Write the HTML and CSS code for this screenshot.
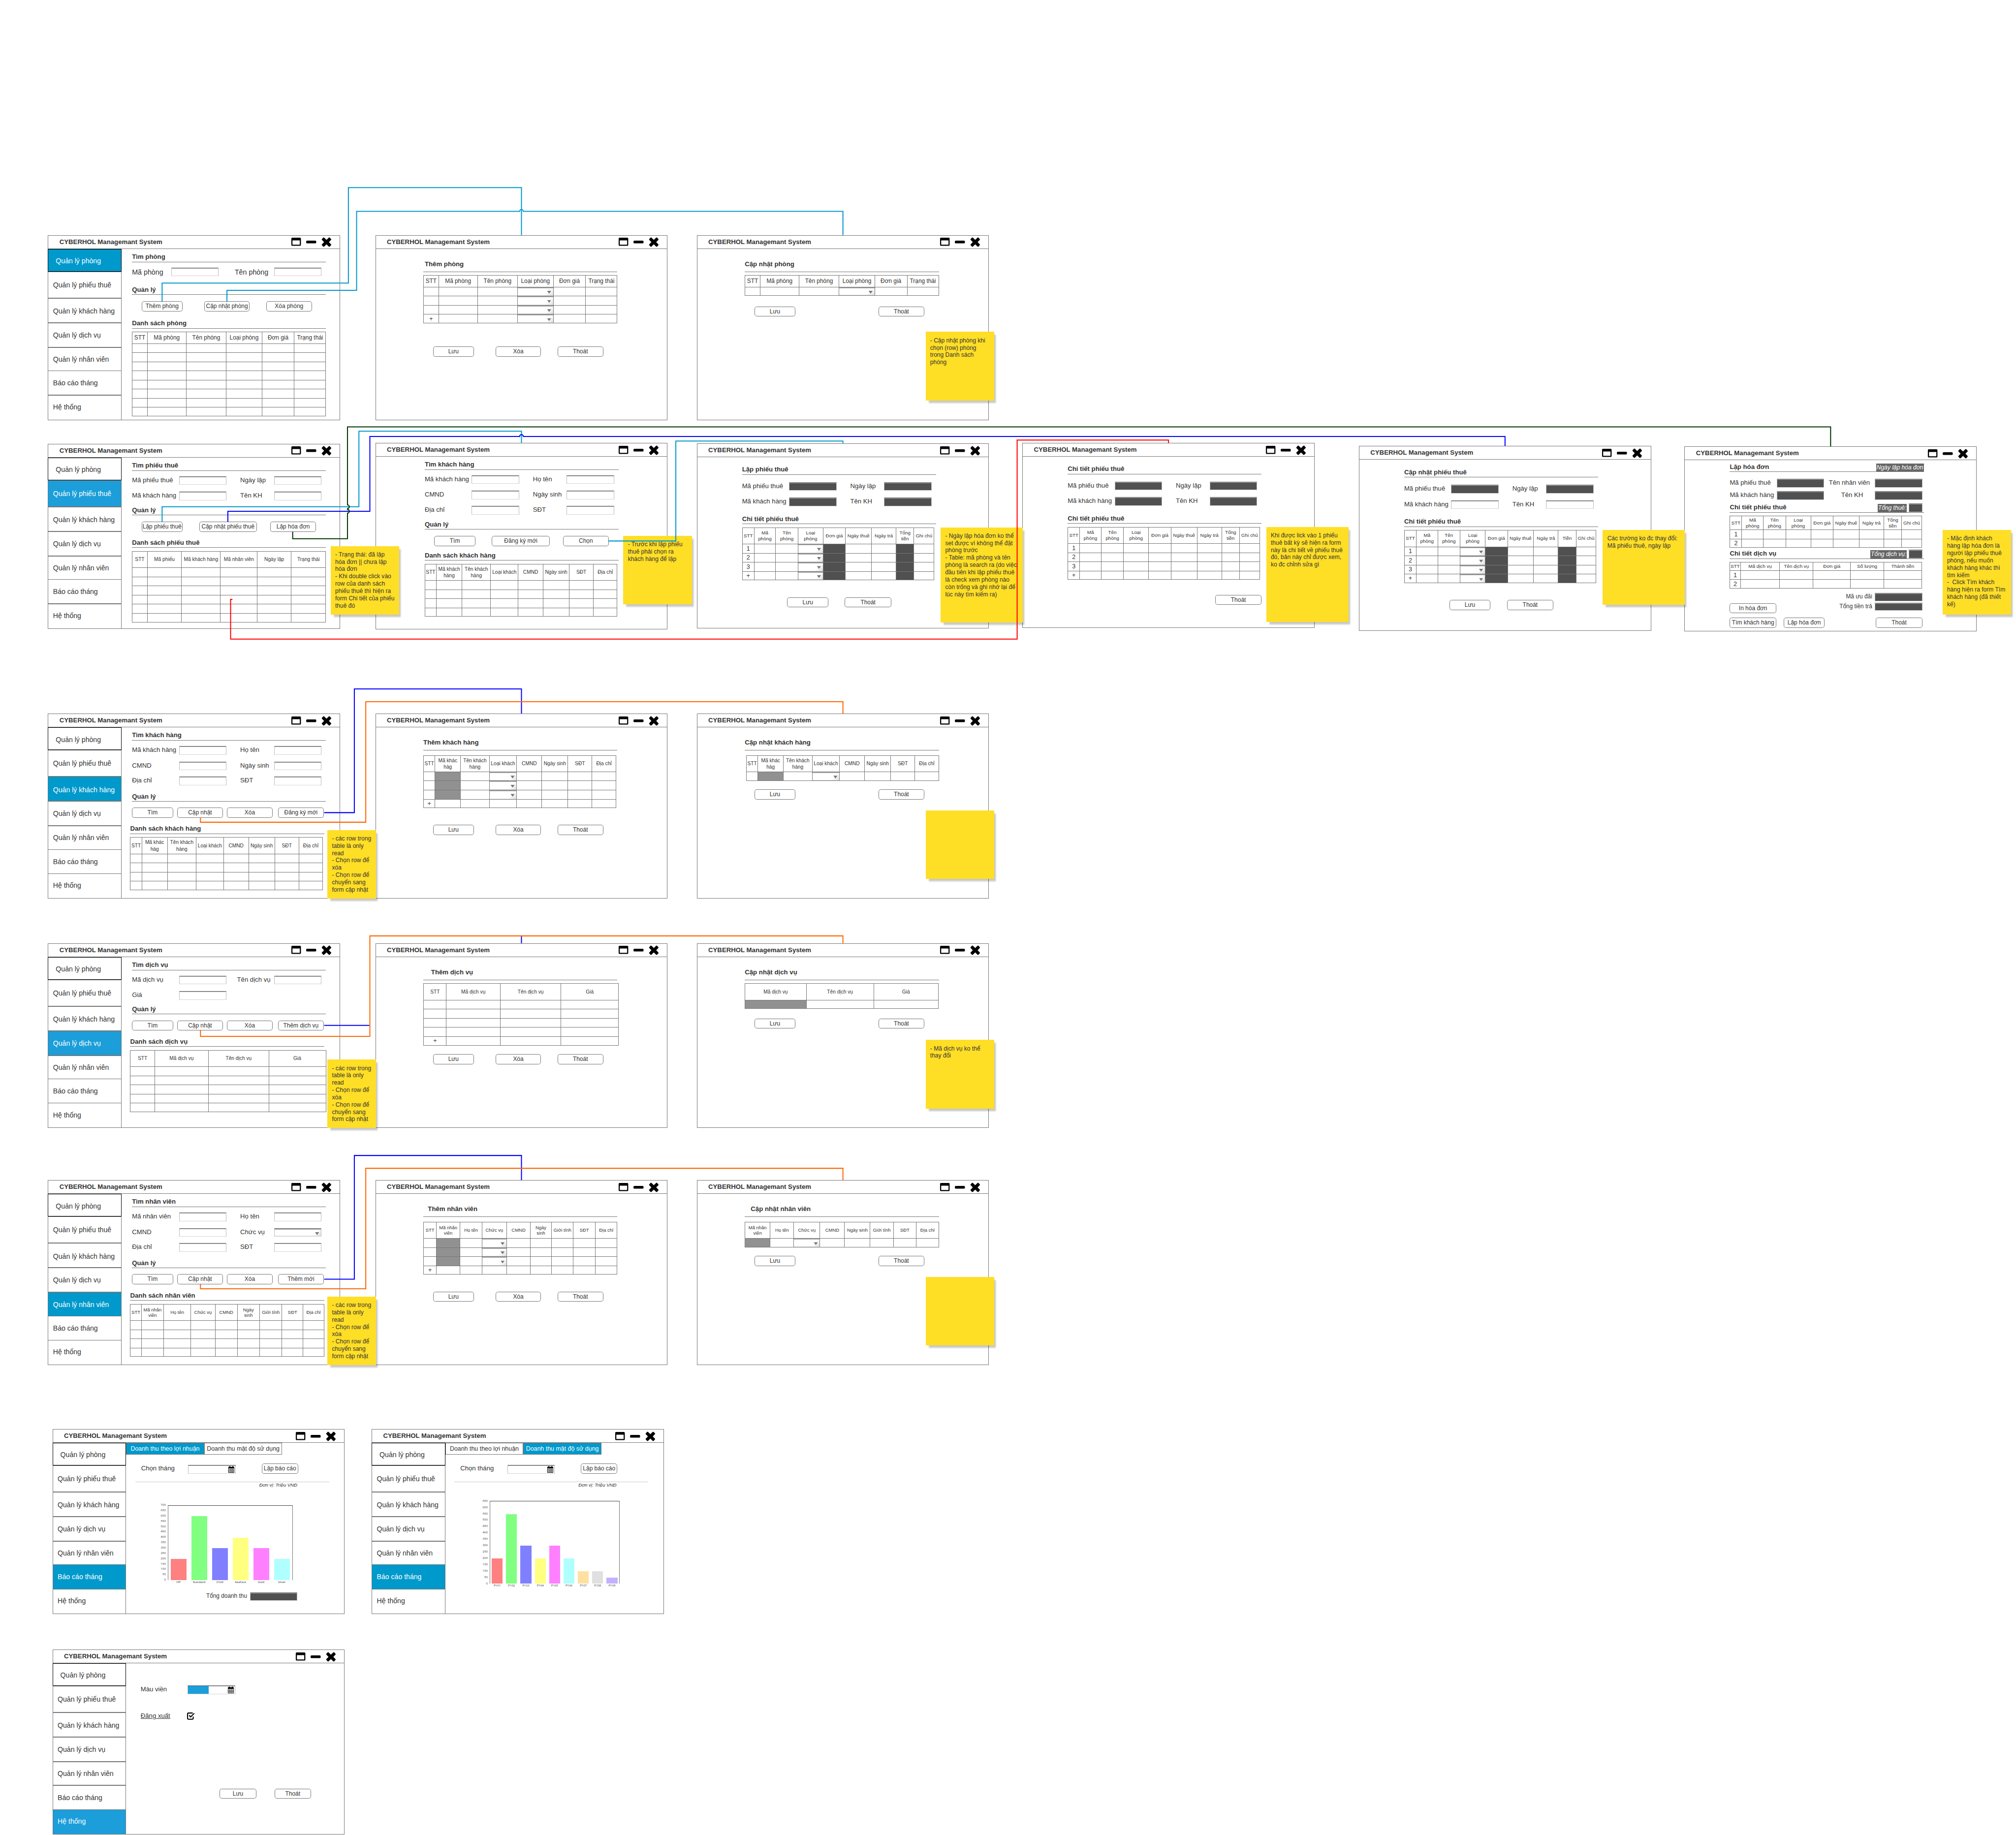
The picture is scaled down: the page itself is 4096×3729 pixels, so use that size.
FILE: styles.css
```
* { box-sizing: border-box; }
html { overflow: hidden; background: #fff; }
body { margin: 0; font-family: "Liberation Sans", Arial, sans-serif; color: #333; }
p, h2, h3, ul { margin: 0; padding: 0; }
.defs { display: none; }

/* canvas */
.board { position: relative; width: 4415px; height: 4019px; zoom: 0.92775; background: #fff; }
.links { position: absolute; inset: 0; width: 4415px; height: 4019px; fill: none; stroke-width: 2.2; }
.cyan { stroke: #09c; }
.blue { stroke: #00f; }
.orange { stroke: #f60; }
.green { stroke: #030; }
.red { stroke: #f00; }

/* windows */
.win { position: absolute; width: 640px; height: 405px; border: 1px solid #777; display: flex; flex-direction: column; }
.tall { height: 409px; }
.bar { flex: none; height: 29px; border-bottom: 1px solid #777; display: flex; justify-content: space-between; padding: 0 18px 0 24px; }
.bar h2 { font-size: 14.25px; line-height: 28px; white-space: nowrap; }
.ctl { width: 89px; height: 22px; margin-top: 4px; }
.body { flex: 1; display: flex; min-height: 0; }
.side { flex: none; width: 161px; margin: 0 0 -1px -1px; list-style: none; font-size: 15.2px; }
.side li { border: 1px solid #777; height: 54px; padding: 0 0 0 10px; display: flex; align-items: center; white-space: nowrap; }
.side li:nth-child(1) { height: 50px; border-color: #000; padding: 3px 0 0 16px; }
.side li:nth-child(2) { height: 58px; }
.side li:nth-child(3) { padding-top: 3px; }
.side li:nth-child(5) { height: 52px; }
.side li:nth-child(6) { margin-top: -1px; }
.side li:nth-child(7) { height: 55px; margin-top: -1px; padding-bottom: 3px; }
.side li.on { background: #09c; color: #fff; }
.side li.lite, .tabs .lite { background: #1b9ed9; }
.main { flex: 1; min-width: 0; padding-left: 23px; }
.dialog { padding-left: 104px; }
.detail { padding-left: 98px; }
.cust { padding-left: 107px; }
.list { margin-left: -4px; }

/* positions on the canvas */
.r1 { top: 515px; } .r2 { top: 972px; } .r3 { top: 1563px; } .r4 { top: 2066px; } .r5 { top: 2585px; } .r6 { top: 3130px; } .r7 { top: 3613px; }
.c1 { left: 105px; } .c2 { left: 822px; } .c3 { left: 1526px; } .c4 { left: 2239px; } .c5 { left: 2976px; } .c6 { left: 3689px; }
.r2.c2, .r2.c4 { top: 970px; }
.r2.c3 { top: 971px; }
.r2.c5 { top: 977px; }
.r2.c6 { top: 978px; }
.r6.c1, .r7.c1 { left: 115px; }
.r6.c2 { left: 814px; }

/* headings */
h3 { width: 425px; height: 20px; border-bottom: 1px solid #777; font-size: 14.25px; line-height: 18px; white-space: nowrap; }
h3.loose { height: 25px; line-height: 16px; }
h3.split { display: flex; justify-content: space-between; }
.in-3 { text-indent: 3px; } .in-10 { text-indent: 10px; } .in-13 { text-indent: 13px; } .in-17 { text-indent: 17px; }
.tag { display: flex; align-items: flex-end; gap: 4px; }
.tag i { background: #666; color: #fff; font: italic 13px/18px "Liberation Sans", Arial, sans-serif; padding: 0 1px; height: 18px; }
.tag .in { width: 30px; margin-right: 3px; }

/* fields */
.row { display: grid; grid-template-columns: 103px 134px 74px 104px; height: 19px; font-size: 14.2px; line-height: 17px; white-space: nowrap; }
.row.rooms { grid-template-columns: 86px 139px 86px 104px; font-size: 15.4px; line-height: 21px; }
.row.svc { grid-template-columns: 103px 127px 81px 104px; }
.row.bill { grid-template-columns: 103px 114px 101px 104px; }
.indent { padding-left: 27px; }
.in { width: 104px; height: 19px; border: 1px solid #bbb; border-top-color: #666; border-bottom-color: #d4d4d4; box-shadow: inset 0 1px #aaa; display: flex; }
.dark { background: #505050; }
.sum { display: grid; grid-template-columns: 80px 104px; justify-content: end; height: 18px; font-size: 12.8px; line-height: 16px; white-space: nowrap; }
.sum .in { height: 18px; }
.sum span { padding-right: 6px; justify-self: end; }
.foot { width: 422px; padding-top: 10px; }
.foot-row { display: flex; justify-content: space-between; margin-top: 3px; height: 23px; }
.foot-row .btn { margin-top: 1px; }

/* buttons */
.btns { display: flex; height: 22px; }
.btn { flex: none; width: 100px; height: 22px; border: 1px solid #777; border-radius: 5px; background: #fff; font-size: 12.9px; line-height: 20px; white-space: nowrap; display: flex; justify-content: center; }
.w80 { width: 80px; } .w90 { width: 90px; } .w102 { width: 102px; } .w127 { width: 127px; }
.l9 { margin-left: 9px; } .l12 { margin-left: 12px; } .l16 { margin-left: 16px; } .l21 { margin-left: 21px; } .l29 { margin-left: 29px; } .l36 { margin-left: 36px; }
.l40 { margin-left: 40px; } .l47 { margin-left: 47px; } .l99 { margin-left: 99px; } .l112 { margin-left: 112px; } .l182 { margin-left: 182px; } .l323 { margin-left: 323px; }

/* vertical rhythm */
.t4 { margin-top: 4px; } .t6 { margin-top: 6px; } .t7 { margin-top: 7px; } .t8 { margin-top: 8px; } .t9 { margin-top: 9px; } .t10 { margin-top: 10px; } .t12 { margin-top: 12px; }
.t13 { margin-top: 13px; } .t14 { margin-top: 14px; } .t15 { margin-top: 15px; } .t16 { margin-top: 16px; } .t18 { margin-top: 18px; } .t19 { margin-top: 19px; }
.t21 { margin-top: 21px; } .t23 { margin-top: 23px; } .t26 { margin-top: 26px; } .t33 { margin-top: 33px; } .t37 { margin-top: 37px; } .t51 { margin-top: 51px; }

/* tables */
table, tbody { display: block; }
table { width: fit-content; border: 1px solid #777; border-width: 1px 0 0 1px; --h: 36px; }
tr { display: grid; grid-template-columns: var(--cols); height: 20px; }
tr:first-child { height: var(--h); }
tr:last-child { height: 19px; }
th, td { padding: 0; border: 1px solid #777; border-width: 0 1px 1px 0; display: flex; align-items: center; justify-content: center; min-width: 0; white-space: nowrap; }
th { font-weight: 400; font-size: 11px; line-height: 14.2px; text-align: center; }
td { font-size: 13.5px; }
.inset { margin-left: 3px; }
.room { --cols: 33px 85px 88px 78px 71px 69px; --h: 25px; }
.room th { font-size: 12.8px; }
.slip { --cols: 33px 75px 85px 81px 74px 76px; }
.guest { --cols: 25px 56px 63px 60px 55px 57px 53px 52px; }
.dv { --cols: 53px 118px 132px 125px; }
.dv-new { --cols: 50px 118px 133px 126px; }
.dv-edit { --cols: 134px 148px 141px; }
.nv { --cols: 24px 49px 59px 54px 48px 49px 49px 46px 46px; }
.nv-new { --cols: 28px 52px 48px 54px 52px 46px 48px 48px 48px; }
.nv-edit { --cols: 55px 52px 57px 54px 56px 51px 50px 49px; }
.nv th, .nv-new th, .nv-edit th { font-size: 10.2px; line-height: 12px; }
.ct { --cols: 26px 47px 49px 55px 49px 57px 54px 39px 44px; }
.ct.short { --h: 30px; }
.ct th, .dvct th { font-size: 10.6px; line-height: 13px; }
.dvct { --cols: 23px 86px 73px 82px 73px 83px; --h: 18px; }
.g { background: #919191; }
.k { background: #505050; }
.s { box-shadow: inset 0 2px #999, inset 0 -1px #ddd; justify-content: flex-end; position: relative; }
.s::before { content: ""; width: 17px; align-self: stretch; margin: 3px 0 1px; background: linear-gradient(135deg, #fff 40%, #ddd); }
.s::after { content: ""; position: absolute; right: 4px; top: 8px; width: 9px; height: 6px; background: #777; clip-path: polygon(0 0, 100% 0, 50% 100%); }

/* sticky notes */
.note { position: absolute; width: 150px; height: 150px; padding: 11px 0 0 10px; background: #ffde26; font-size: 13px; line-height: 16px; white-space: nowrap; box-shadow: 5px 6px 3px -1px rgba(0, 0, 0, .22); }
.n-room { left: 2027px; top: 727px; }
.n-slip { left: 724px; top: 1196px; }
.n-pick { left: 1365px; top: 1174px; }
.n-new { left: 2060px; top: 1155px; width: 180px; height: 208px; }
.n-view { left: 2773px; top: 1154px; width: 180px; height: 208px; }
.n-edit { left: 3510px; top: 1161px; width: 180px; height: 164px; }
.n-bill { left: 4254px; top: 1161px; height: 185px; }
.n-cust { left: 717px; top: 1818px; width: 107px; }
.n-cust-edit { left: 2027px; top: 1775px; }
.n-svc { left: 717px; top: 2321px; width: 107px; }
.n-svc-edit { left: 2027px; top: 2278px; }
.n-staff { left: 717px; top: 2840px; width: 107px; }
.n-staff-edit { left: 2027px; top: 2797px; }

/* reports */
.report { padding: 0; }
.tabs { display: flex; height: 26px; font-size: 13.4px; white-space: nowrap; }
.tabs span { width: 171px; border: 1px solid #777; line-height: 24px; text-align: center; }
.tabs .on { background-color: #09c; color: #fff; }
.pick { display: flex; align-items: flex-start; padding-left: 33px; margin-top: 20px; height: 22px; font-size: 14.2px; line-height: 22px; }
.pick span, .set span { width: 103px; }
.pick .in { margin-top: 3px; }
.pick .btn { margin-left: 57px; width: 80px; }
.cal { width: 13px; height: 15px; margin: 1px 2px 0 auto; }
.unit { width: 425px; margin: 17px 0 0 20px; border-top: 1px solid #ccc; padding: 1px 70px 0 0; text-align: right; font: italic 10.4px/14px "Liberation Sans", Arial, sans-serif; height: 15px; }
.chart { display: grid; grid-template-columns: 20px 274px; column-gap: 4px; margin: 37px 0 0 67px; height: 164px; font: 6.5px/8px "Open Sans", sans-serif; }
.chart.dense { grid-template-columns: 20px 285px; margin: 28px 0 0 73px; height: 181px; }
.ys { display: flex; flex-direction: column; justify-content: space-between; align-items: flex-end; margin: -4px 0; }
.plot { display: flex; border: 1px solid #777; border-top-color: #444; border-bottom: 0; align-items: flex-end; }
.plot div { flex: 1; height: 100%; display: flex; flex-direction: column; justify-content: flex-end; align-items: center; }
.plot div i { width: 76%; flex: none; }
.plot div b { font-weight: 400; height: 8px; margin-bottom: -9px; margin-top: 1px; }
.b1 { background: #ff8080; } .b2 { background: #80ff80; } .b3 { background: #8080ff; } .b4 { background: #ffff80; } .b5 { background: #ff80ff; }
.b6 { background: #b0ffff; } .b7 { background: #ffe0a0; } .b8 { background: #e0e0e0; } .b9 { background: #c4b0ff; }
.report .sum { width: 375px; margin-top: 27px; grid-template-columns: 100px 104px; }

/* settings */
.set { display: flex; padding-left: 9px; font-size: 14.2px; line-height: 18px; }
.set.color { margin-top: 49px; }
.set.out { margin-top: 39px; }
.swatch { width: 45px; background: #1b9ed9; }
.check { width: 17px; height: 17px; margin-left: -1px; }
.save { margin: 150px 0 0 182px; }
```
FILE: index.html
```
<!DOCTYPE html>
<html lang="vi">
<head>
<meta charset="utf-8">
<title>CYBERHOL Managemant System</title>
<link rel="stylesheet" href="styles.css">
</head>
<body>
<svg class="defs">
<symbol id="ctl" viewBox="0 0 89 22"><path fill-rule="evenodd" d="M3 1H20a2 2 0 0 1 2 2V17a2 2 0 0 1-2 2H3a2 2 0 0 1-2-2V3a2 2 0 0 1 2-2ZM3.500 7V16.500H19.500V7Z"/><rect x="33.500" y="7.500" width="22" height="6" rx="2"/><path d="M68 4 71 .8Q72 .2 73 1L78 6 83 1Q84 .2 85 .8L88 4Q88.800 5 88 6L83.300 10.800 88 15.600Q88.800 16.600 88 17.600L85 20.800Q84 21.400 83 20.600L78 15.600 73 20.600Q72 21.400 71 20.800L68 17.600Q67.200 16.600 68 15.600L72.700 10.800 68 6Q67.200 5 68 4Z"/></symbol>
<symbol id="cal" viewBox="0 0 13 15"><path fill-rule="evenodd" d="M0 2H2V.5H4.500V2H8.500V.5H11V2H13V15H0ZM1 5.500V8H3.400V5.500ZM4.200 5.500V8H6.200V5.500ZM7 5.500V8H9V5.500ZM9.800 5.500V8H12V5.500ZM1 8.800V11H3.400V8.800ZM4.200 8.800V11H6.200V8.800ZM7 8.800V11H9V8.800ZM9.800 8.800V11H12V8.800ZM1 11.800V14H3.400V11.800ZM4.200 11.800V14H6.200V11.800ZM7 11.800V14H9V11.800ZM9.800 11.800V14H12V11.800Z"/></symbol>
</svg>
<div class="board">

<!-- Rooms -->
<section class="win r1 c1">
<header class="bar"><h2>CYBERHOL Managemant System</h2><svg class="ctl"><use href="#ctl"/></svg></header>
<div class="body">
<ul class="side"><li class="on">Quản lý phòng<li>Quản lý phiếu thuê<li>Quản lý khách hàng<li>Quản lý dịch vụ<li>Quản lý nhân viên<li>Báo cáo tháng<li>Hệ thống</ul>
<div class="main">
<h3 class="t9">Tìm phòng</h3>
<div class="row rooms t12"><span>Mã phòng</span><div class="in"></div><span>Tên phòng</span><div class="in"></div></div>
<h3 class="t21">Quản lý</h3>
<div class="btns t14"><div class="btn w90 l21">Thêm phòng</div><div class="btn l47">Cập nhật phòng</div><div class="btn l36">Xóa phòng</div></div>
<h3 class="t18">Danh sách phòng</h3>
<table class="room t7"><tr><th>STT<th>Mã phòng<th>Tên phòng<th>Loại phòng<th>Đơn giá<th>Trạng thái
<tr><td><td><td><td><td><td><tr><td><td><td><td><td><td><tr><td><td><td><td><td><td><tr><td><td><td><td><td><td>
<tr><td><td><td><td><td><td><tr><td><td><td><td><td><td><tr><td><td><td><td><td><td><tr><td><td><td><td><td><td></table>
</div>
</div>
</section>

<section class="win r1 c2">
<header class="bar"><h2>CYBERHOL Managemant System</h2><svg class="ctl"><use href="#ctl"/></svg></header>
<div class="main dialog">
<h3 class="loose in-3 t26">Thêm phòng</h3>
<table class="room t7"><tr><th>STT<th>Mã phòng<th>Tên phòng<th>Loại phòng<th>Đơn giá<th>Trạng thái
<tr><td><td><td><td class="s"><td><td><tr><td><td><td><td class="s"><td><td><tr><td><td><td><td class="s"><td><td>
<tr><td>+<td><td><td class="s"><td><td></table>
<div class="btns t51"><div class="btn w90 l21">Lưu</div><div class="btn l47">Xóa</div><div class="btn l36">Thoát</div></div>
</div>
</section>

<section class="win r1 c3">
<header class="bar"><h2>CYBERHOL Managemant System</h2><svg class="ctl"><use href="#ctl"/></svg></header>
<div class="main dialog">
<h3 class="loose t26">Cập nhật phòng</h3>
<table class="room t7"><tr><th>STT<th>Mã phòng<th>Tên phòng<th>Loại phòng<th>Đơn giá<th>Trạng thái
<tr><td><td><td><td class="s"><td><td></table>
<div class="btns t23"><div class="btn w90 l21">Lưu</div><div class="btn l182">Thoát</div></div>
</div>
</section>

<!-- Rental slips -->
<section class="win r2 c1">
<header class="bar"><h2>CYBERHOL Managemant System</h2><svg class="ctl"><use href="#ctl"/></svg></header>
<div class="body">
<ul class="side"><li>Quản lý phòng<li class="on lite">Quản lý phiếu thuê<li>Quản lý khách hàng<li>Quản lý dịch vụ<li>Quản lý nhân viên<li>Báo cáo tháng<li>Hệ thống</ul>
<div class="main">
<h3 class="t9">Tìm phiếu thuê</h3>
<div class="row t12"><span>Mã phiếu thuê</span><div class="in"></div><span>Ngày lập</span><div class="in"></div></div>
<div class="row t15"><span>Mã khách hàng</span><div class="in"></div><span>Tên KH</span><div class="in"></div></div>
<h3 class="t13">Quản lý</h3>
<div class="btns t14"><div class="btn w90 l21">Lập phiếu thuê</div><div class="btn w127 l36">Cập nhật phiếu thuê</div><div class="btn l29">Lập hóa đơn</div></div>
<h3 class="t15">Danh sách phiếu thuê</h3>
<table class="slip t7"><tr><th>STT<th>Mã phiếu<th>Mã khách hàng<th>Mã nhân viên<th>Ngày lập<th>Trạng thái
<tr><td><td><td><td><td><td><tr><td><td><td><td><td><td><tr><td><td><td><td><td><td>
<tr><td><td><td><td><td><td><tr><td><td><td><td><td><td><tr><td><td><td><td><td><td></table>
</div>
</div>
</section>

<section class="win tall r2 c2">
<header class="bar"><h2>CYBERHOL Managemant System</h2><svg class="ctl"><use href="#ctl"/></svg></header>
<div class="main cust">
<h3 class="t9">Tìm khách hàng</h3>
<div class="row t12"><span>Mã khách hàng</span><div class="in"></div><span>Họ tên</span><div class="in"></div></div>
<div class="row t15"><span>CMND</span><div class="in"></div><span>Ngày sinh</span><div class="in"></div></div>
<div class="row t14"><span>Địa chỉ</span><div class="in"></div><span>SĐT</span><div class="in"></div></div>
<h3 class="t13">Quản lý</h3>
<div class="btns t14"><div class="btn w90 l21">Tìm</div><div class="btn w127 l36">Đăng ký mới</div><div class="btn l29">Chọn</div></div>
<h3 class="t12">Danh sách khách hàng</h3>
<table class="guest t7"><tr><th>STT<th>Mã khách<br>hàng<th>Tên khách<br>hàng<th>Loại khách<th>CMND<th>Ngày sinh<th>SĐT<th>Địa chỉ
<tr><td><td><td><td><td><td><td><td><tr><td><td><td><td><td><td><td><td>
<tr><td><td><td><td><td><td><td><td><tr><td><td><td><td><td><td><td><td></table>
</div>
</section>

<section class="win r2 c3">
<header class="bar"><h2>CYBERHOL Managemant System</h2><svg class="ctl"><use href="#ctl"/></svg></header>
<div class="main detail">
<h3 class="t19">Lập phiếu thuê</h3>
<div class="row t16"><span>Mã phiếu thuê</span><div class="in dark"></div><span>Ngày lập</span><div class="in dark"></div></div>
<div class="row t15"><span>Mã khách hàng</span><div class="in dark"></div><span>Tên KH</span><div class="in dark"></div></div>
<h3 class="t19">Chi tiết phiếu thuê</h3>
<table class="ct t7"><tr><th>STT<th>Mã<br>phòng<th>Tên<br>phòng<th>Loại<br>phòng<th>Đơn giá<th>Ngày thuê<th>Ngày trả<th>Tổng<br>tiền<th>Ghi chú
<tr><td>1<td><td><td class="s"><td class="k"><td><td><td class="k"><td>
<tr><td>2<td><td><td class="s"><td class="k"><td><td><td class="k"><td>
<tr><td>3<td><td><td class="s"><td class="k"><td><td><td class="k"><td>
<tr><td>+<td><td><td class="s"><td class="k"><td><td><td class="k"><td></table>
<div class="btns t37"><div class="btn w90 l99">Lưu</div><div class="btn w102 l36">Thoát</div></div>
</div>
</section>

<section class="win r2 c4">
<header class="bar"><h2>CYBERHOL Managemant System</h2><svg class="ctl"><use href="#ctl"/></svg></header>
<div class="main detail">
<h3 class="t19">Chi tiết phiếu thuê</h3>
<div class="row t16"><span>Mã phiếu thuê</span><div class="in dark"></div><span>Ngày lập</span><div class="in dark"></div></div>
<div class="row t15"><span>Mã khách hàng</span><div class="in dark"></div><span>Tên KH</span><div class="in dark"></div></div>
<h3 class="t19">Chi tiết phiếu thuê</h3>
<table class="ct t7"><tr><th>STT<th>Mã<br>phòng<th>Tên<br>phòng<th>Loại<br>phòng<th>Đơn giá<th>Ngày thuê<th>Ngày trả<th>Tổng<br>tiền<th>Ghi chú
<tr><td>1<td><td><td><td><td><td><td><td><tr><td>2<td><td><td><td><td><td><td><td>
<tr><td>3<td><td><td><td><td><td><td><td><tr><td>+<td><td><td><td><td><td><td><td></table>
<div class="btns t33"><div class="btn w102 l323">Thoát</div></div>
</div>
</section>

<section class="win r2 c5">
<header class="bar"><h2>CYBERHOL Managemant System</h2><svg class="ctl"><use href="#ctl"/></svg></header>
<div class="main detail">
<h3 class="t19">Cập nhật phiếu thuê</h3>
<div class="row t16"><span>Mã phiếu thuê</span><div class="in dark"></div><span>Ngày lập</span><div class="in dark"></div></div>
<div class="row t15"><span>Mã khách hàng</span><div class="in"></div><span>Tên KH</span><div class="in"></div></div>
<h3 class="t19">Chi tiết phiếu thuê</h3>
<table class="ct t7"><tr><th>STT<th>Mã<br>phòng<th>Tên<br>phòng<th>Loại<br>phòng<th>Đơn giá<th>Ngày thuê<th>Ngày trả<th>Tiền<th>Ghi chú
<tr><td>1<td><td><td class="s"><td class="k"><td><td><td class="k"><td>
<tr><td>2<td><td><td class="s"><td class="k"><td><td><td class="k"><td>
<tr><td>3<td><td><td class="s"><td class="k"><td><td><td class="k"><td>
<tr><td>+<td><td><td class="s"><td class="k"><td><td><td class="k"><td></table>
<div class="btns t37"><div class="btn w90 l99">Lưu</div><div class="btn w102 l36">Thoát</div></div>
</div>
</section>

<section class="win r2 c6">
<header class="bar"><h2>CYBERHOL Managemant System</h2><svg class="ctl"><use href="#ctl"/></svg></header>
<div class="main detail">
<h3 class="split t6">Lập hóa đơn<span class="tag"><i>Ngày lập hóa đơn</i></span></h3>
<div class="row bill t15"><span>Mã phiếu thuê</span><div class="in dark"></div><span>Tên nhân viên</span><div class="in dark"></div></div>
<div class="row bill t8"><span>Mã khách hàng</span><div class="in dark"></div><span class="indent">Tên KH</span><div class="in dark"></div></div>
<h3 class="split t8">Chi tiết phiếu thuê<span class="tag"><i>Tổng thuê:</i><span class="in dark"></span></span></h3>
<table class="ct short t7"><tr><th>STT<th>Mã<br>phòng<th>Tên<br>phòng<th>Loại<br>phòng<th>Đơn giá<th>Ngày thuê<th>Ngày trả<th>Tổng<br>tiền<th>Ghi chú
<tr><td>1<td><td><td><td><td><td><td><td><tr><td>2<td><td><td><td><td><td><td><td></table>
<h3 class="split t4">Chi tiết dịch vụ<span class="tag"><i>Tổng dịch vụ:</i><span class="in dark"></span></span></h3>
<table class="dvct t7"><tr><th>STT<th>Mã dịch vụ<th>Tên dịch vụ<th>Đơn giá<th>Số lượng<th>Thành tiền
<tr><td>1<td><td><td><td><td><tr><td>2<td><td><td><td><td></table>
<div class="foot">
<div class="sum"><span>Mã ưu đãi</span><div class="in dark"></div></div>
<div class="foot-row"><div class="btn w102">In hóa đơn</div><div class="sum"><span>Tổng tiền trả</span><div class="in dark"></div></div></div>
<div class="btns t10"><div class="btn w102">Tìm khách hàng</div><div class="btn w90 l16">Lập hóa đơn</div><div class="btn w102 l112">Thoát</div></div>
</div>
</div>
</section>

<!-- Customers -->
<section class="win r3 c1">
<header class="bar"><h2>CYBERHOL Managemant System</h2><svg class="ctl"><use href="#ctl"/></svg></header>
<div class="body">
<ul class="side"><li>Quản lý phòng<li>Quản lý phiếu thuê<li class="on">Quản lý khách hàng<li>Quản lý dịch vụ<li>Quản lý nhân viên<li>Báo cáo tháng<li>Hệ thống</ul>
<div class="main">
<h3 class="t9">Tìm khách hàng</h3>
<div class="row t12"><span>Mã khách hàng</span><div class="in"></div><span>Họ tên</span><div class="in"></div></div>
<div class="row t15"><span>CMND</span><div class="in"></div><span>Ngày sinh</span><div class="in"></div></div>
<div class="row t14"><span>Địa chỉ</span><div class="in"></div><span>SĐT</span><div class="in"></div></div>
<h3 class="t16">Quản lý</h3>
<div class="btns t13"><div class="btn w90">Tìm</div><div class="btn l9">Cập nhật</div><div class="btn l9">Xóa</div><div class="btn l12">Đăng ký mới</div></div>
<div class="list">
<h3 class="t16">Danh sách khách hàng</h3>
<table class="guest t7"><tr><th>STT<th>Mã khác<br>hàg<th>Tên khách<br>hàng<th>Loại khách<th>CMND<th>Ngày sinh<th>SĐT<th>Địa chỉ
<tr><td><td><td><td><td><td><td><td><tr><td><td><td><td><td><td><td><td>
<tr><td><td><td><td><td><td><td><td><tr><td><td><td><td><td><td><td><td></table>
</div>
</div>
</div>
</section>

<section class="win r3 c2">
<header class="bar"><h2>CYBERHOL Managemant System</h2><svg class="ctl"><use href="#ctl"/></svg></header>
<div class="main dialog">
<h3 class="loose t26">Thêm khách hàng</h3>
<table class="guest t10"><tr><th>STT<th>Mã khác<br>hàg<th>Tên khách<br>hàng<th>Loại khách<th>CMND<th>Ngày sinh<th>SĐT<th>Địa chỉ
<tr><td><td class="g"><td><td class="s"><td><td><td><td><tr><td><td class="g"><td><td class="s"><td><td><td><td>
<tr><td><td class="g"><td><td class="s"><td><td><td><td><tr><td>+<td><td><td><td><td><td><td></table>
<div class="btns t37"><div class="btn w90 l21">Lưu</div><div class="btn l47">Xóa</div><div class="btn l36">Thoát</div></div>
</div>
</section>

<section class="win r3 c3">
<header class="bar"><h2>CYBERHOL Managemant System</h2><svg class="ctl"><use href="#ctl"/></svg></header>
<div class="main dialog">
<h3 class="loose t26">Cập nhật khách hàng</h3>
<table class="guest inset t10"><tr><th>STT<th>Mã khác<br>hàg<th>Tên khách<br>hàng<th>Loại khách<th>CMND<th>Ngày sinh<th>SĐT<th>Địa chỉ
<tr><td><td class="g"><td><td class="s"><td><td><td><td></table>
<div class="btns t19"><div class="btn w90 l21">Lưu</div><div class="btn l182">Thoát</div></div>
</div>
</section>

<!-- Services -->
<section class="win r4 c1">
<header class="bar"><h2>CYBERHOL Managemant System</h2><svg class="ctl"><use href="#ctl"/></svg></header>
<div class="body">
<ul class="side"><li>Quản lý phòng<li>Quản lý phiếu thuê<li>Quản lý khách hàng<li class="on lite">Quản lý dịch vụ<li>Quản lý nhân viên<li>Báo cáo tháng<li>Hệ thống</ul>
<div class="main">
<h3 class="t9">Tìm dịch vụ</h3>
<div class="row svc t12"><span>Mã dịch vụ</span><div class="in"></div><span>Tên dịch vụ</span><div class="in"></div></div>
<div class="row svc t15"><span>Giá</span><div class="in"></div></div>
<h3 class="t12">Quản lý</h3>
<div class="btns t13"><div class="btn w90">Tìm</div><div class="btn l9">Cập nhật</div><div class="btn l9">Xóa</div><div class="btn l12">Thêm dịch vụ</div></div>
<div class="list">
<h3 class="t16">Danh sách dịch vụ</h3>
<table class="dv t7"><tr><th>STT<th>Mã dịch vụ<th>Tên dịch vụ<th>Giá
<tr><td><td><td><td><tr><td><td><td><td><tr><td><td><td><td><tr><td><td><td><td><tr><td><td><td><td></table>
</div>
</div>
</div>
</section>

<section class="win r4 c2">
<header class="bar"><h2>CYBERHOL Managemant System</h2><svg class="ctl"><use href="#ctl"/></svg></header>
<div class="main dialog">
<h3 class="loose in-17 t26">Thêm dịch vụ</h3>
<table class="dv-new t7"><tr><th>STT<th>Mã dịch vụ<th>Tên dịch vụ<th>Giá
<tr><td><td><td><td><tr><td><td><td><td><tr><td><td><td><td><tr><td><td><td><td><tr><td>+<td><td><td></table>
<div class="btns t19"><div class="btn w90 l21">Lưu</div><div class="btn l47">Xóa</div><div class="btn l36">Thoát</div></div>
</div>
</section>

<section class="win r4 c3">
<header class="bar"><h2>CYBERHOL Managemant System</h2><svg class="ctl"><use href="#ctl"/></svg></header>
<div class="main dialog">
<h3 class="loose t26">Cập nhật dịch vụ</h3>
<table class="dv-edit t7"><tr><th>Mã dịch vụ<th>Tên dịch vụ<th>Giá
<tr><td class="g"><td><td></table>
<div class="btns t21"><div class="btn w90 l21">Lưu</div><div class="btn l182">Thoát</div></div>
</div>
</section>

<!-- Staff -->
<section class="win r5 c1">
<header class="bar"><h2>CYBERHOL Managemant System</h2><svg class="ctl"><use href="#ctl"/></svg></header>
<div class="body">
<ul class="side"><li>Quản lý phòng<li>Quản lý phiếu thuê<li>Quản lý khách hàng<li>Quản lý dịch vụ<li class="on">Quản lý nhân viên<li>Báo cáo tháng<li>Hệ thống</ul>
<div class="main">
<h3 class="t9">Tìm nhân viên</h3>
<div class="row t12"><span>Mã nhân viên</span><div class="in"></div><span>Họ tên</span><div class="in"></div></div>
<div class="row t15"><span>CMND</span><div class="in"></div><span>Chức vụ</span><div class="in s"></div></div>
<div class="row t14"><span>Địa chỉ</span><div class="in"></div><span>SĐT</span><div class="in"></div></div>
<h3 class="t16">Quản lý</h3>
<div class="btns t13"><div class="btn w90">Tìm</div><div class="btn l9">Cập nhật</div><div class="btn l9">Xóa</div><div class="btn l12">Thêm mới</div></div>
<div class="list">
<h3 class="t16">Danh sách nhân viên</h3>
<table class="nv t7"><tr><th>STT<th>Mã nhân<br>viên<th>Họ tên<th>Chức vụ<th>CMND<th>Ngày<br>sinh<th>Giới tính<th>SĐT<th>Địa chỉ
<tr><td><td><td><td><td><td><td><td><td><tr><td><td><td><td><td><td><td><td><td>
<tr><td><td><td><td><td><td><td><td><td><tr><td><td><td><td><td><td><td><td><td></table>
</div>
</div>
</div>
</section>

<section class="win r5 c2">
<header class="bar"><h2>CYBERHOL Managemant System</h2><svg class="ctl"><use href="#ctl"/></svg></header>
<div class="main dialog">
<h3 class="loose in-10 t26">Thêm nhân viên</h3>
<table class="nv-new t10"><tr><th>STT<th>Mã nhân<br>viên<th>Họ tên<th>Chức vụ<th>CMND<th>Ngày<br>sinh<th>Giới tính<th>SĐT<th>Địa chỉ
<tr><td><td class="g"><td><td class="s"><td><td><td><td><td><tr><td><td class="g"><td><td class="s"><td><td><td><td><td>
<tr><td><td class="g"><td><td class="s"><td><td><td><td><td><tr><td>+<td><td><td><td><td><td><td><td></table>
<div class="btns t37"><div class="btn w90 l21">Lưu</div><div class="btn l47">Xóa</div><div class="btn l36">Thoát</div></div>
</div>
</section>

<section class="win r5 c3">
<header class="bar"><h2>CYBERHOL Managemant System</h2><svg class="ctl"><use href="#ctl"/></svg></header>
<div class="main dialog">
<h3 class="loose in-13 t26">Cập nhật nhân viên</h3>
<table class="nv-edit t10"><tr><th>Mã nhân<br>viên<th>Họ tên<th>Chức vụ<th>CMND<th>Ngày sinh<th>Giới tính<th>SĐT<th>Địa chỉ
<tr><td class="g"><td><td class="s"><td><td><td><td><td></table>
<div class="btns t19"><div class="btn w90 l21">Lưu</div><div class="btn l182">Thoát</div></div>
</div>
</section>

<!-- Reports -->
<section class="win r6 c1">
<header class="bar"><h2>CYBERHOL Managemant System</h2><svg class="ctl"><use href="#ctl"/></svg></header>
<div class="body">
<ul class="side"><li>Quản lý phòng<li>Quản lý phiếu thuê<li>Quản lý khách hàng<li>Quản lý dịch vụ<li>Quản lý nhân viên<li class="on">Báo cáo tháng<li>Hệ thống</ul>
<div class="main report">
<div class="tabs"><span class="on">Doanh thu theo lợi nhuận</span><span>Doanh thu mật độ sử dụng</span></div>
<div class="pick"><span>Chọn tháng</span><div class="in"><svg class="cal"><use href="#cal"/></svg></div><div class="btn">Lập báo cáo</div></div>
<p class="unit">Đơn vị: Triệu VNĐ</p>
<div class="chart">
<div class="ys"><span>700</span><span>650</span><span>600</span><span>550</span><span>500</span><span>450</span><span>400</span><span>350</span><span>300</span><span>250</span><span>200</span><span>150</span><span>100</span><span>50</span><span>0</span></div>
<div class="plot"><div><i class="b1" style="height:28.6%"></i><b>VIP</b></div><div><i class="b2" style="height:85.7%"></i><b>Standard</b></div><div><i class="b3" style="height:42.9%"></i><b>Child</b></div><div><i class="b4" style="height:57.1%"></i><b>SeaFace</b></div><div><i class="b5" style="height:42.9%"></i><b>Gold</b></div><div><i class="b6" style="height:28.6%"></i><b>Silver</b></div></div>
</div>
<div class="sum"><span>Tổng doanh thu</span><div class="in dark"></div></div>
</div>
</div>
</section>

<section class="win r6 c2">
<header class="bar"><h2>CYBERHOL Managemant System</h2><svg class="ctl"><use href="#ctl"/></svg></header>
<div class="body">
<ul class="side"><li>Quản lý phòng<li>Quản lý phiếu thuê<li>Quản lý khách hàng<li>Quản lý dịch vụ<li>Quản lý nhân viên<li class="on">Báo cáo tháng<li>Hệ thống</ul>
<div class="main report">
<div class="tabs"><span>Doanh thu theo lợi nhuận</span><span class="on lite">Doanh thu mật độ sử dụng</span></div>
<div class="pick"><span>Chọn tháng</span><div class="in"><svg class="cal"><use href="#cal"/></svg></div><div class="btn">Lập báo cáo</div></div>
<p class="unit">Đơn vị: Triệu VNĐ</p>
<div class="chart dense">
<div class="ys"><span>650</span><span>600</span><span>550</span><span>500</span><span>450</span><span>400</span><span>350</span><span>300</span><span>250</span><span>200</span><span>150</span><span>100</span><span>50</span><span>0</span></div>
<div class="plot"><div><i class="b1" style="height:30.8%"></i><b>P101</b></div><div><i class="b2" style="height:84.6%"></i><b>P102</b></div><div><i class="b3" style="height:46.2%"></i><b>P103</b></div><div><i class="b4" style="height:30.8%"></i><b>P104</b></div><div><i class="b5" style="height:46.2%"></i><b>P105</b></div><div><i class="b6" style="height:30.8%"></i><b>P106</b></div><div><i class="b7" style="height:15.4%"></i><b>P107</b></div><div><i class="b8" style="height:15.4%"></i><b>P108</b></div><div><i class="b9" style="height:7.7%"></i><b>P109</b></div></div>
</div>
</div>
</div>
</section>

<!-- Settings -->
<section class="win r7 c1">
<header class="bar"><h2>CYBERHOL Managemant System</h2><svg class="ctl"><use href="#ctl"/></svg></header>
<div class="body">
<ul class="side"><li>Quản lý phòng<li>Quản lý phiếu thuê<li>Quản lý khách hàng<li>Quản lý dịch vụ<li>Quản lý nhân viên<li>Báo cáo tháng<li class="on lite">Hệ thống</ul>
<div class="main">
<div class="set color"><span>Màu viền</span><div class="in"><div class="swatch"></div><svg class="cal"><use href="#cal"/></svg></div></div>
<div class="set out"><span><u>Đăng xuất</u></span><svg class="check" viewBox="0 0 15 15"><path fill="none" stroke="#000" stroke-width="2" d="M11 2H3A2 2 0 0 0 1 4V12A2 2 0 0 0 3 14H10A2 2 0 0 0 12 12V9M4 6.500 7 9.500 14 2.500"/></svg></div>
<div class="btns save"><div class="btn w80">Lưu</div><div class="btn w80 l40">Thoát</div></div>
</div>
</div>
</section>

<!-- Sticky notes -->
<aside class="note n-room">- Cập nhật phòng khi<br>chọn (row) phòng<br>trong Danh sách<br>phòng</aside>
<aside class="note n-slip">- Trạng thái: đã lập<br>hóa đơn || chưa lập<br>hóa đơn<br>- Khi double click vào<br>row của danh sách<br>phiếu thuê thì hiện ra<br>form Chi tiết của phiếu<br>thuê đó</aside>
<aside class="note n-pick">- Trước khi lập phiếu<br>thuê phải chọn ra<br>khách hàng để lập</aside>
<aside class="note n-new">- Ngày lập hóa đơn ko thể<br>set được vì không thể đặt<br>phòng trước<br>- Table: mã phòng và tên<br>phòng là search ra (do việc<br>đầu tiên khi lập phiếu thuê<br>là check xem phòng nào<br>còn trống và ghi nhớ lại để<br>lúc này tìm kiếm ra)</aside>
<aside class="note n-view">Khi được lick vào 1 phiếu<br>thuê bất kỳ sẽ hiện ra form<br>này là chi tiết về phiếu thuê<br>đó, bản này chỉ được xem,<br>ko đc chỉnh sửa gì</aside>
<aside class="note n-edit">Các trường ko đc thay đổi:<br>Mã phiếu thuê, ngày lập</aside>
<aside class="note n-bill">- Mặc định khách<br>hàng lập hóa đơn là<br>người lập phiếu thuê<br>phòng, nếu muốn<br>khách hàng khác thì<br>tìm kiếm<br>-&nbsp; Click Tìm khách<br>hàng hiện ra form Tìm<br>khách hàng (đã thiết<br>kế)</aside>
<aside class="note n-cust">- các row trong<br>table là only<br>read<br>- Chọn row để<br>xóa<br>- Chọn row để<br>chuyển sang<br>form cập nhật</aside>
<aside class="note n-cust-edit"></aside>
<aside class="note n-svc">- các row trong<br>table là only<br>read<br>- Chọn row để<br>xóa<br>- Chọn row để<br>chuyển sang<br>form cập nhật</aside>
<aside class="note n-svc-edit">- Mã dịch vụ ko thể<br>thay đổi</aside>
<aside class="note n-staff">- các row trong<br>table là only<br>read<br>- Chọn row để<br>xóa<br>- Chọn row để<br>chuyển sang<br>form cập nhật</aside>
<aside class="note n-staff-edit"></aside>

<!-- Connectors -->
<svg class="links" viewBox="0 0 4415 4019">
<path class="cyan" d="M355 661V620H763V411H1142V515M497 661V636H781V463H1138A4 4 0 0 1 1146 463H1846V515"/>
<path class="cyan" d="M355 1143V1110H786V944.500H1142V970M1332 1185H1480V966H1846V971"/>
<path class="blue" d="M499 1143V1120H810V956H1138A4 4 0 0 1 1146 956H3296V977"/>
<path class="green" d="M641 1165V1180H761V1124A4 4 0 0 0 761 1116V1114A4 4 0 0 0 761 1106V935H4009V978"/>
<path class="red" d="M509 1313H505V1400H2227.500V964H2559V970"/>
<path class="blue" d="M710 1780H776V1509H1142V1563M710 2802H776V2531H1142V2585M710 2246H809M1142 2051V2066"/>
<path class="orange" d="M439 1791V1801H801V1537H1846V1563M439 2257V2270H810V2050H1846V2066M439 2813V2823H801V2559H1846V2585"/>
</svg>
</div>
</body>
</html>
```
